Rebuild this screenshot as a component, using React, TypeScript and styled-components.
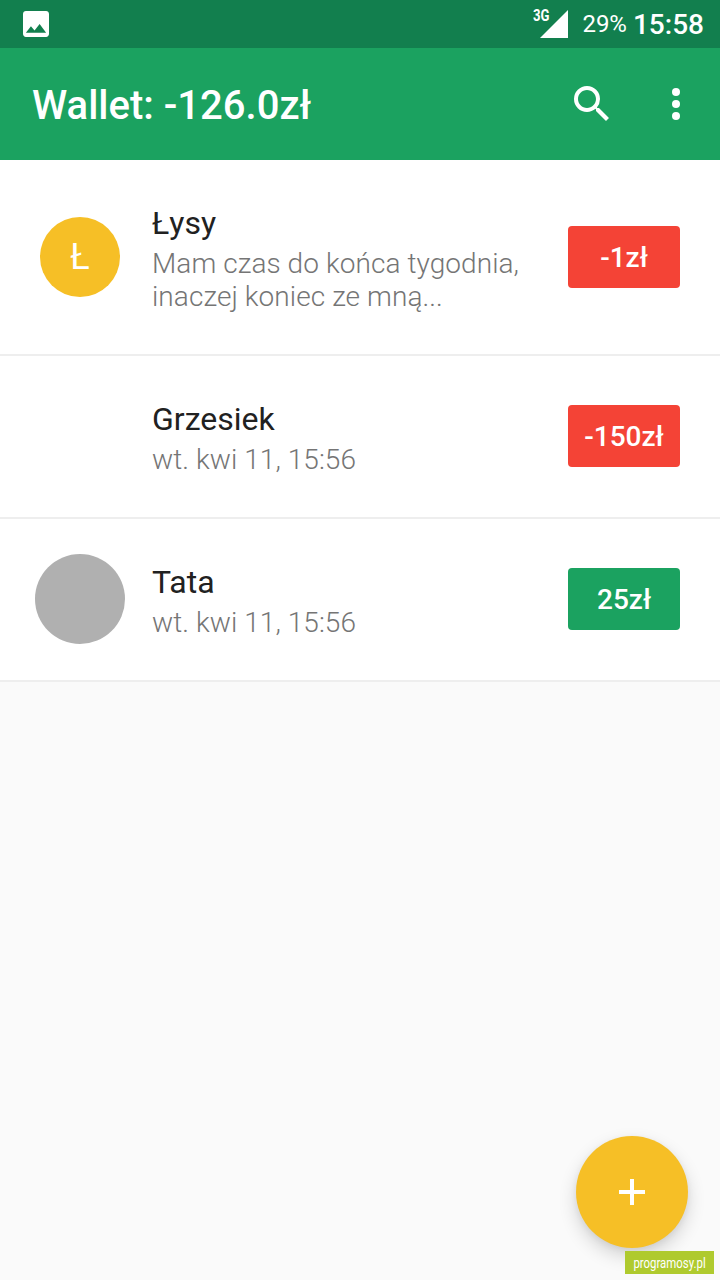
import styled, { createGlobalStyle } from 'styled-components';

const GlobalStyle = createGlobalStyle`
  html, body {
    margin: 0;
    padding: 0;
    background: #fafafa;
    font-family: Roboto, "Noto Sans", sans-serif;
  }
`;

const Screen = styled.div`
  position: relative;
  width: 720px;
  height: 1280px;
  overflow: hidden;
  background: #fafafa;
`;

const StatusBar = styled.div`
  height: 48px;
  display: flex;
  align-items: center;
  padding: 0 16px 0 23px;
  background: #127f4e;
  color: #fff;
`;

const StatusRight = styled.div`
  margin-left: auto;
  display: flex;
  align-items: center;
`;

const Signal = styled.div`
  position: relative;
  width: 28px;
  height: 28px;
`;

const NetworkLabel = styled.span`
  position: absolute;
  left: -7px;
  top: -3px;
  font-size: 16px;
  line-height: 18px;
  font-weight: 700;
  transform: scaleX(0.82);
  transform-origin: left center;
`;

const Battery = styled.span`
  margin-left: 14px;
  font-size: 24px;
  font-weight: 400;
`;

const Clock = styled.span`
  margin-left: 6px;
  font-size: 28px;
  font-weight: 500;
`;

const AppBar = styled.header`
  height: 112px;
  display: flex;
  align-items: center;
  padding: 0 36px 0 32px;
  background: #1ba260;
  color: #fff;
`;

const Title = styled.h1`
  margin: 0;
  padding-top: 2px;
  flex: 1;
  font-size: 40px;
  font-weight: 500;
`;

const MoreIcon = styled.svg`
  margin-left: 52px;
`;

const Row = styled.div<{ $height: number }>`
  box-sizing: border-box;
  height: ${(p) => p.$height}px;
  display: flex;
  align-items: center;
  padding-right: 40px;
  padding-bottom: ${(p) => p.$height % 2}px;
  background: #fff;
  border-bottom: 2px solid #eeeeee;
`;

const AvatarSlot = styled.div`
  width: 160px;
  flex: none;
  display: flex;
  justify-content: center;
`;

const Avatar = styled.div<{ $size: number; $color: string }>`
  width: ${(p) => p.$size}px;
  height: ${(p) => p.$size}px;
  display: flex;
  align-items: center;
  justify-content: center;
  border-radius: 50%;
  background: ${(p) => p.$color};
  color: #fff;
  font-size: 36px;
`;

const Body = styled.div`
  flex: 1;
  min-width: 0;
  margin-left: -8px;
  padding-top: 2px;
`;

const Name = styled.div`
  color: #212121;
  font-size: 32px;
  line-height: 40px;
`;

const Detail = styled.div`
  margin-top: 4px;
  color: #757575;
  font-size: 28px;
  font-weight: 300;
  line-height: 33px;
  letter-spacing: 0.07px;
`;

const Amount = styled.div<{ $negative: boolean }>`
  width: 112px;
  height: 62px;
  flex: none;
  display: flex;
  align-items: center;
  justify-content: center;
  border-radius: 4px;
  background: ${(p) => (p.$negative ? '#f44336' : '#1ba260')};
  color: #fff;
  font-size: 28px;
  font-weight: 500;
`;

const Fab = styled.button`
  position: absolute;
  left: 576px;
  top: 1136px;
  width: 112px;
  height: 112px;
  display: flex;
  align-items: center;
  justify-content: center;
  padding: 0;
  border: 0;
  border-radius: 50%;
  background: #f6bf26;
  box-shadow: 0 8px 18px rgba(0, 0, 0, 0.16), 0 2px 6px rgba(0, 0, 0, 0.06);
`;

const Watermark = styled.div`
  position: absolute;
  left: 625px;
  top: 1251px;
  width: 89px;
  height: 23px;
  display: flex;
  align-items: center;
  justify-content: center;
  background: #afca2e;
  color: #fff;
  font-size: 15px;
`;

const WatermarkText = styled.span`
  display: block;
  white-space: nowrap;
  transform: scaleX(0.76);
`;

const rows = [
  { name: 'Łysy', detail: ['Mam czas do końca tygodnia,', 'inaczej koniec ze mną...'], amount: '-1zł', height: 196, avatar: 'letter' },
  { name: 'Grzesiek', detail: ['wt. kwi 11, 15:56'], amount: '-150zł', height: 163, avatar: 'none' },
  { name: 'Tata', detail: ['wt. kwi 11, 15:56'], amount: '25zł', height: 163, avatar: 'grey' },
];

export default function App() {
  return (
    <Screen>
      <GlobalStyle />
      <StatusBar>
        <svg width="26" height="26" viewBox="3 3 18 18" fill="#fff">
          <path d="M21 19V5c0-1.100-.9-2-2-2H5c-1.100 0-2 .9-2 2v14c0 1.100.9 2 2 2h14c1.100 0 2-.9 2-2zM8.500 13.500l2.500 3.010L14.500 12l4.500 6H5l3.500-4.500z" />
        </svg>
        <StatusRight>
          <Signal>
            <svg width="28" height="28" viewBox="0 0 28 28" fill="#fff">
              <path d="M28 0v28H0z" />
            </svg>
            <NetworkLabel>3G</NetworkLabel>
          </Signal>
          <Battery>29%</Battery>
          <Clock>15:58</Clock>
        </StatusRight>
      </StatusBar>
      <AppBar>
        <Title>Wallet: -126.0zł</Title>
        <svg width="48" height="48" viewBox="0 0 24 24" fill="#fff">
          <path d="M15.500 14h-.79l-.28-.27A6.470 6.470 0 0 0 16 9.500 6.500 6.500 0 1 0 9.500 16c1.610 0 3.090-.59 4.230-1.570l.27.28v.79l5 4.990L20.490 19l-4.990-5zm-6 0C7.010 14 5 11.990 5 9.500S7.010 5 9.500 5 14 7.010 14 9.500 11.990 14 9.500 14z" />
        </svg>
        <MoreIcon width="16" height="48" viewBox="0 0 16 48" fill="#fff">
          <circle cx="8" cy="12" r="4" />
          <circle cx="8" cy="24" r="4" />
          <circle cx="8" cy="36" r="4" />
        </MoreIcon>
      </AppBar>
      {rows.map((row) => (
        <Row key={row.name} $height={row.height}>
          <AvatarSlot>
            {row.avatar === 'letter' && <Avatar $size={80} $color="#f6bf26">Ł</Avatar>}
            {row.avatar === 'grey' && <Avatar $size={90} $color="#b0b0b0" />}
          </AvatarSlot>
          <Body>
            <Name>{row.name}</Name>
            <Detail>
              {row.detail.map((line) => (
                <div key={line}>{line}</div>
              ))}
            </Detail>
          </Body>
          <Amount $negative={row.amount.startsWith('-')}>{row.amount}</Amount>
        </Row>
      ))}
      <Fab aria-label="Dodaj">
        <svg width="28" height="28" viewBox="0 0 28 28" fill="#fff">
          <path d="M12 1h4v11h11v4H16v11h-4V16H1v-4h11z" />
        </svg>
      </Fab>
      <Watermark>
        <WatermarkText>programosy.pl</WatermarkText>
      </Watermark>
    </Screen>
  );
}
